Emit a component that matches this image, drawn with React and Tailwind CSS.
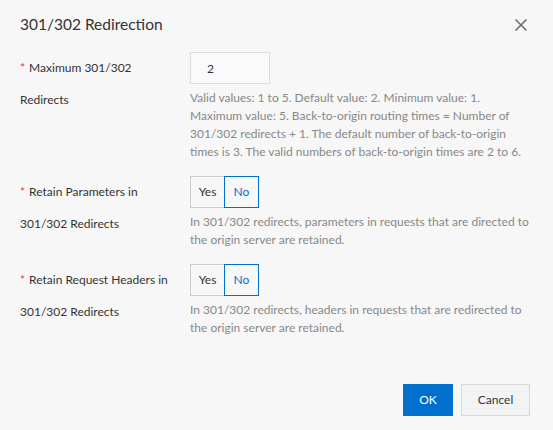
import React, { useState } from 'react';

const Label = ({ lines }) => (
  <div className="w-[190px] shrink-0 pl-5 text-[12px] leading-[32px] text-[#333] whitespace-nowrap">
    <div>
      <span className="text-[#e5413c] mr-1">*</span>
      {lines[0]}
    </div>
    <div>{lines[1]}</div>
  </div>
);

const Help = ({ children }) => (
  <p className="mt-[5px] w-[340px] text-[12px] leading-[18px] text-[#888]">{children}</p>
);

const YesNo = ({ value, onChange }) => (
  <div className="flex text-[12px]">
    <button
      onClick={() => onChange(true)}
      className={`w-[35px] h-8 border ${value ? 'border-[#0070cc] text-[#0070cc] z-10' : 'border-[#ccc] text-[#333]'}`}
    >
      Yes
    </button>
    <button
      onClick={() => onChange(false)}
      className={`-ml-px w-[35px] h-8 border ${!value ? 'border-[#0070cc] text-[#0070cc] z-10' : 'border-[#ccc] text-[#333]'}`}
    >
      No
    </button>
  </div>
);

export default function App() {
  const [retainParams, setRetainParams] = useState(false);
  const [retainHeaders, setRetainHeaders] = useState(false);

  return (
    <div className="w-[553px] h-[430px] bg-[#f7f7f7] flex flex-col font-['Lato',sans-serif] text-[#333]">
      {/* Header */}
      <header className="h-[50px] flex items-center justify-between pl-5 pr-[26px]">
        <h1 className="text-[15.5px]">301/302 Redirection</h1>
        <button className="w-3 h-3 text-[#666]" aria-label="Close">
          <svg viewBox="0 0 12 12" width="12" height="12" fill="none" stroke="currentColor" strokeWidth="1.5">
            <path d="M0.5 0.5 L11.5 11.5 M11.5 0.5 L0.5 11.5" />
          </svg>
        </button>
      </header>

      {/* Form */}
      <div className="pt-[2px] flex flex-col gap-[15px]">
        <div className="flex">
          <Label lines={['Maximum 301/302', 'Redirects']} />
          <div>
            <input
              defaultValue="2"
              className="w-[80px] h-8 border border-[#dcdcdc] bg-[#fafafa] pl-4 text-[12px] text-[#333] outline-none"
            />
            <Help>
              Valid values: 1 to 5. Default value: 2. Minimum value: 1. Maximum value: 5. Back-to-origin routing times
              = Number of 301/302 redirects + 1. The default number of back-to-origin times is 3. The valid numbers of
              back-to-origin times are 2 to 6.
            </Help>
          </div>
        </div>

        <div className="flex">
          <Label lines={['Retain Parameters in', '301/302 Redirects']} />
          <div>
            <YesNo value={retainParams} onChange={setRetainParams} />
            <Help>
              In 301/302 redirects, parameters in requests that are directed to the origin server are retained.
            </Help>
          </div>
        </div>

        <div className="flex">
          <Label lines={['Retain Request Headers in', '301/302 Redirects']} />
          <div>
            <YesNo value={retainHeaders} onChange={setRetainHeaders} />
            <Help>
              In 301/302 redirects, headers in requests that are redirected to the origin server are retained.
            </Help>
          </div>
        </div>
      </div>

      {/* Footer */}
      <footer className="mt-auto pb-[14px] pr-[23px] flex justify-end gap-2 text-[12px]">
        <button className="w-[50px] h-8 bg-[#0070cc] text-white">OK</button>
        <button className="w-[69px] h-8 border border-[#d9d9d9] bg-[#f3f3f3] text-[#333]">Cancel</button>
      </footer>
    </div>
  );
}
